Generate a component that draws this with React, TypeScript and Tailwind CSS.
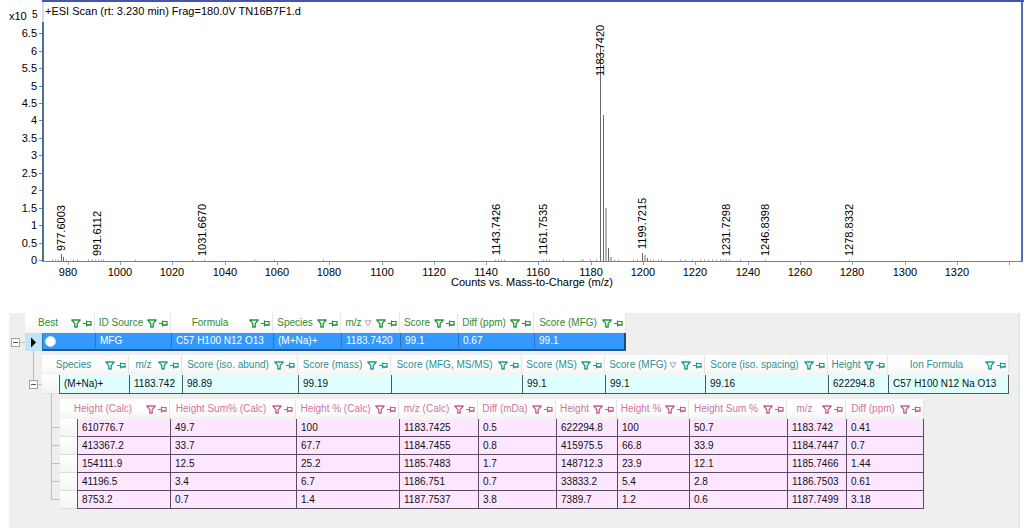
import React from "react";

type Column = { label: string; width: number; sorted?: boolean };

const peakLabels = [
  { text: "977.6003", x: 61, y: 251 },
  { text: "991.6112", x: 97, y: 256 },
  { text: "1031.6670", x: 202, y: 256 },
  { text: "1143.7426", x: 496, y: 255 },
  { text: "1161.7535", x: 543, y: 255 },
  { text: "1183.7420", x: 600, y: 76 },
  { text: "1199.7215", x: 642, y: 249 },
  { text: "1231.7298", x: 726, y: 256 },
  { text: "1246.8398", x: 765, y: 256 },
  { text: "1278.8332", x: 849, y: 256 },
];

const peaks = [
  [600.5, 46],
  [603.5, 115],
  [606, 208],
  [608.5, 248],
  [611, 257],
  [642.5, 253],
  [645, 255],
  [647.5, 258],
  [61.5, 254],
  [63.5, 257],
];

const noise = [
  52, 55, 58, 66, 73, 77, 88, 92, 95, 98, 101, 103, 135, 192, 204, 254, 274, 323, 495, 498, 501, 504, 543, 546,
  549, 563, 581, 583, 590, 596, 614, 618, 633, 637, 650, 653, 658, 661, 680, 685, 692, 700, 704, 708, 712, 716,
  720, 723, 726, 729, 740, 765, 849,
];

const yTicks = [0, 0.5, 1, 1.5, 2, 2.5, 3, 3.5, 4, 4.5, 5, 5.5, 6, 6.5];
const xTicks = [980, 1000, 1020, 1040, 1060, 1080, 1100, 1120, 1140, 1160, 1180, 1200, 1220, 1240, 1260, 1280, 1300, 1320];

const massToX = (mass: number) => 120 + (mass - 1000) * 2.615;
const countToY = (count: number) => 260 - count * 34.9;

function Spectrum() {
  return (
    <svg
      viewBox="0 0 1024 313"
      className="block w-full font-['Liberation_Sans',Arial,sans-serif] text-[11px]"
      role="img"
      aria-label="ESI mass spectrum"
    >
      <rect x="42" y="0" width="982" height="2" fill="#4355b0" />
      <path d="M43 2V22" stroke="#a9b9d2" strokeWidth="1" />
      <path d="M43 22V262" stroke="#4d6f98" strokeWidth="2" />
      <path d="M42 261.5H1023" stroke="#5b88b4" strokeWidth="1" />
      <path d="M1022 2V262" stroke="#4a74b4" strokeWidth="2" />
      <text x="9" y="20">x10</text>
      <text x="32" y="18" className="text-[10px]">5</text>
      <text x="45" y="15">+ESI Scan (rt: 3.230 min) Frag=180.0V TN16B7F1.d</text>
      {yTicks.map((tick) => (
        <g key={tick}>
          <path d={`M39 ${Math.round(countToY(tick)) + 0.5}h3`} stroke="#6d87a5" />
          <text x="37" y={Math.round(countToY(tick)) + 4} textAnchor="end">{tick}</text>
        </g>
      ))}
      {xTicks.map((tick) => (
        <g key={tick}>
          <path d={`M${Math.round(massToX(tick)) + 0.5} 262v3`} stroke="#8aa2bd" />
          <text x={Math.round(massToX(tick))} y="276" textAnchor="middle">{tick}</text>
        </g>
      ))}
      <path d="M1009.500 262v3" stroke="#8aa2bd" />
      {noise.map((x) => (
        <path key={x} d={`M${x + 0.5} 259.500V261`} stroke="#a5a8b4" />
      ))}
      {peaks.map(([x, y]) => (
        <path key={x} d={`M${x} ${y}V261`} stroke="#6a6a6e" />
      ))}
      {peakLabels.map((peak) => (
        <text key={peak.text} transform={`translate(${peak.x + 4} ${peak.y}) rotate(-90)`}>{peak.text}</text>
      ))}
      <text x="532" y="286" textAnchor="middle">Counts vs. Mass-to-Charge (m/z)</text>
    </svg>
  );
}

function FilterIcon() {
  return (
    <svg width="10" height="9" viewBox="0 0 10 9" fill="none" stroke="currentColor" aria-hidden="true">
      <path d="M.8 1H9.200L6.200 4.600V8H3.800V4.600Z" strokeWidth="1.300" strokeLinejoin="round" />
    </svg>
  );
}

function PinIcon() {
  return (
    <svg width="9" height="9" viewBox="0 0 9 9" fill="none" stroke="currentColor" aria-hidden="true">
      <path d="M0 4.500H3M3.500 1.500V7.500M3.500 2.500H8V6H3.500" strokeWidth="1.200" />
      <path d="M3.500 6H8.500" strokeWidth="1.300" />
    </svg>
  );
}

function SortIcon() {
  return (
    <svg width="8" height="7" viewBox="0 0 8 7" fill="none" stroke="#a9a3b0" aria-hidden="true">
      <path d="M1 .8H7L4 5.800Z" />
    </svg>
  );
}

type GridProps = {
  columns: Column[];
  rows: React.ReactNode[][];
  selectorWidth: number;
  headClass: string;
  iconClass: string;
  rowClass: string;
  cellClass: string;
  selectorClass: string;
  selector?: React.ReactNode;
};

function Grid({ columns, rows, selectorWidth, headClass, iconClass, rowClass, cellClass, selectorClass, selector }: GridProps) {
  const total = columns.reduce((sum, column) => sum + column.width, selectorWidth);
  return (
    <table className="shrink-0 table-fixed border-separate border-spacing-0 text-left" style={{ width: total }}>
      <colgroup>
        <col style={{ width: selectorWidth }} />
        {columns.map((column, i) => (
          <col key={i} style={{ width: column.width }} />
        ))}
      </colgroup>
      <thead>
        <tr className={headClass}>
          {columns.map((column, i) => (
            <th
              key={i}
              colSpan={i === 0 ? 2 : 1}
              className="border-r border-[#e6e6e6] bg-linear-to-b from-white from-50% to-[#f3f3f3] p-0 font-normal"
            >
              <div className="flex items-center pr-0.5">
                <span className="flex flex-1 items-center justify-center gap-0.5 whitespace-nowrap">
                  {column.label}
                  {column.sorted && <SortIcon />}
                </span>
                <span className={`flex items-center gap-0.5 ${iconClass}`}>
                  <button type="button" aria-label={`Filter ${column.label}`}>
                    <FilterIcon />
                  </button>
                  <button type="button" aria-label={`Pin ${column.label}`}>
                    <PinIcon />
                  </button>
                </span>
              </div>
            </th>
          ))}
        </tr>
      </thead>
      <tbody>
        {rows.map((row, r) => (
          <tr key={r} className={rowClass}>
            <td className={`p-0 ${selectorClass}`}>{selector}</td>
            {row.map((cell, c) => (
              <td key={c} className={`border-b border-l p-0 pl-1 whitespace-nowrap last:border-r ${cellClass}`}>
                {cell}
              </td>
            ))}
          </tr>
        ))}
      </tbody>
    </table>
  );
}

function Collapse({ label }: { label: string }) {
  return (
    <button
      type="button"
      aria-label={label}
      className="flex size-[9px] shrink-0 items-center justify-center border border-[#a3a3a3] bg-white"
    >
      <span className="h-px w-[5px] bg-[#555]" />
    </button>
  );
}

const compoundColumns: Column[] = [
  { label: "Best", width: 53 },
  { label: "ID Source", width: 76 },
  { label: "Formula", width: 102 },
  { label: "Species", width: 68 },
  { label: "m/z", width: 59, sorted: true },
  { label: "Score", width: 58 },
  { label: "Diff (ppm)", width: 76 },
  { label: "Score (MFG)", width: 92 },
];

const speciesColumns: Column[] = [
  { label: "Species", width: 70 },
  { label: "m/z", width: 53 },
  { label: "Score (iso. abund)", width: 116 },
  { label: "Score (mass)", width: 93 },
  { label: "Score (MFG, MS/MS)", width: 131 },
  { label: "Score (MS)", width: 83 },
  { label: "Score (MFG)", width: 100, sorted: true },
  { label: "Score (iso. spacing)", width: 123 },
  { label: "Height", width: 60 },
  { label: "Ion Formula", width: 121 },
];

const isotopeColumns: Column[] = [
  { label: "Height (Calc)", width: 93 },
  { label: "Height Sum% (Calc)", width: 126 },
  { label: "Height % (Calc)", width: 103 },
  { label: "m/z (Calc)", width: 79 },
  { label: "Diff (mDa)", width: 78 },
  { label: "Height", width: 61 },
  { label: "Height %", width: 72 },
  { label: "Height Sum %", width: 98 },
  { label: "m/z", width: 59 },
  { label: "Diff (ppm)", width: 78 },
];

const isotopeRows = [
  ["610776.7", "49.7", "100", "1183.7425", "0.5", "622294.8", "100", "50.7", "1183.742", "0.41"],
  ["413367.2", "33.7", "67.7", "1184.7455", "0.8", "415975.5", "66.8", "33.9", "1184.7447", "0.7"],
  ["154111.9", "12.5", "25.2", "1185.7483", "1.7", "148712.3", "23.9", "12.1", "1185.7466", "1.44"],
  ["41196.5", "3.4", "6.7", "1186.751", "0.7", "33833.2", "5.4", "2.8", "1186.7503", "0.61"],
  ["8753.2", "0.7", "1.4", "1187.7537", "3.8", "7389.7", "1.2", "0.6", "1187.7499", "3.18"],
];

export default function App() {
  return (
    <main className="flex min-h-screen flex-col bg-white text-[#111]">
      <Spectrum />
      <section className="mr-1 ml-[9px] flex-1 overflow-x-auto border-r-2 border-[#dfe5ea] bg-[#efefef] font-['Liberation_Sans',Arial,sans-serif] text-[10px] leading-4">
        <div className="flex">
          <div className="flex w-4 shrink-0 items-end pb-1 pl-0.5">
            <Collapse label="Collapse compound" />
            <span className="mb-1 h-px flex-1 bg-[#c4c4c4]" />
          </div>
          <Grid
            columns={compoundColumns}
            selectorWidth={17}
            headClass="h-5 text-[#2f8a35]"
            iconClass="text-[#1f9638]"
            rowClass="h-[18px] bg-[#3399ff] text-white"
            cellClass="border-b-2 border-b-[#24588f] border-l-[#2c74bd] last:border-r-2 last:border-r-[#24486f]"
            selectorClass="bg-[#bfe3f8]"
            selector={
              <svg width="17" height="16" viewBox="0 0 17 16" className="block" aria-hidden="true">
                <path d="M6 3.500L11 8.500L6 13.500Z" fill="#000" />
              </svg>
            }
            rows={[
              [
                <input
                  key="best"
                  type="radio"
                  name="best"
                  defaultChecked
                  aria-label="Best"
                  className="-ml-0.5 block size-[11px] appearance-none rounded-full border border-[#cfe3f7] bg-white"
                />,
                "MFG",
                "C57 H100 N12 O13",
                "(M+Na)+",
                "1183.7420",
                "99.1",
                "0.67",
                "99.1",
              ],
            ]}
          />
        </div>

        <div className="flex pl-4">
          <div className="flex w-[17px] shrink-0 flex-col">
            <span className="ml-2 h-[29px] w-px bg-[#bdbdbd]" />
            <div className="flex items-center pl-1">
              <Collapse label="Collapse species" />
              <span className="h-px flex-1 bg-[#c4c4c4]" />
            </div>
          </div>
          <div className="pt-1">
            <Grid
              columns={speciesColumns}
              selectorWidth={17}
              headClass="h-5 text-[#2b8f93]"
              iconClass="text-[#1d9c95]"
              rowClass="h-[19px] bg-[#e0ffff]"
              cellClass="border-[#4a5a5c]"
              selectorClass="border-b border-[#e2e2e2] bg-linear-to-b from-white to-[#f3f3f3]"
              rows={[["(M+Na)+", "1183.742", "98.89", "99.19", "", "99.1", "99.1", "99.16", "622294.8", "C57 H100 N12 Na O13"]]}
            />
          </div>
        </div>

        <div className="flex pl-[33px]">
          <div className="w-[18px] shrink-0 pl-[9px]">
            <div className="h-4 border-l border-[#bdbdbd]" />
            {isotopeRows.map((row) => (
              <div key={row[0]} className="h-[18px] border-b border-l border-[#bdbdbd]" />
            ))}
          </div>
          <div className="pt-[5px]">
            <Grid
              columns={isotopeColumns}
              selectorWidth={17}
              headClass="h-5 text-[#d0739c]"
              iconClass="text-[#cc5c8d]"
              rowClass="h-[18px] bg-[#fde6ff]"
              cellClass="border-[#5c4a60]"
              selectorClass="border-b border-[#dcdcdc] bg-linear-to-b from-white to-[#f5f5f5]"
              rows={isotopeRows}
            />
          </div>
        </div>
      </section>
    </main>
  );
}
